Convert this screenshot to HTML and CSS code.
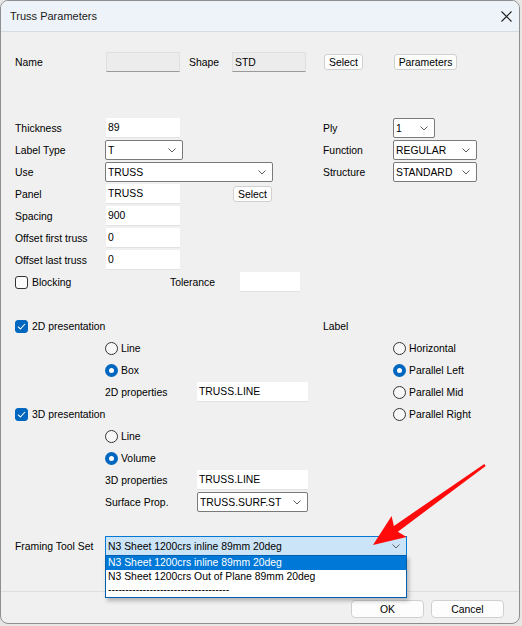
FILE: index.html
```html
<!DOCTYPE html>
<html lang="en">
<head>
    <meta charset="UTF-8">
    <title>Truss Parameters</title>
    <link rel="stylesheet" href="styles.css">
</head>
<body>
    <div class="window">
        <div class="titlebar">
            <span class="title">Truss Parameters</span>
            <svg class="close" width="11" height="11" viewBox="0 0 11 11">
                <path d="M0.5 0.5 L10.5 10.5 M10.5 0.5 L0.5 10.5" stroke="#1b1b1b" stroke-width="1.1" fill="none"/>
            </svg>
        </div>

        <div class="content">
            <div class="row row-name">
                <span class="lbl">Name</span>
                <input class="txt disabled" value="" readonly>
                <span class="lbl-shape">Shape</span>
                <input class="txt disabled" value="STD" readonly>
                <button class="btn btn-select">Select</button>
                <button class="btn btn-params">Parameters</button>
            </div>

            <div class="section">
                <div class="row">
                    <div class="left">
                        <span class="lbl">Thickness</span>
                        <input class="txt" value="89">
                    </div>
                    <div class="right">
                        <span class="rlbl">Ply</span>
                        <div class="combo w-ply"><span>1</span><svg class="chev" width="8" height="5" viewBox="0 0 8 5"><path d="M0.5 0.5 L4 4 L7.5 0.5" stroke="#5f5f5f" fill="none"/></svg></div>
                    </div>
                </div>
                <div class="row">
                    <div class="left">
                        <span class="lbl">Label Type</span>
                        <div class="combo w-label"><span>T</span><svg class="chev" width="8" height="5" viewBox="0 0 8 5"><path d="M0.5 0.5 L4 4 L7.5 0.5" stroke="#5f5f5f" fill="none"/></svg></div>
                    </div>
                    <div class="right">
                        <span class="rlbl">Function</span>
                        <div class="combo w-func"><span>REGULAR</span><svg class="chev" width="8" height="5" viewBox="0 0 8 5"><path d="M0.5 0.5 L4 4 L7.5 0.5" stroke="#5f5f5f" fill="none"/></svg></div>
                    </div>
                </div>
                <div class="row">
                    <div class="left">
                        <span class="lbl">Use</span>
                        <div class="combo w-use"><span>TRUSS</span><svg class="chev" width="8" height="5" viewBox="0 0 8 5"><path d="M0.5 0.5 L4 4 L7.5 0.5" stroke="#5f5f5f" fill="none"/></svg></div>
                    </div>
                    <div class="right">
                        <span class="rlbl">Structure</span>
                        <div class="combo w-func"><span>STANDARD</span><svg class="chev" width="8" height="5" viewBox="0 0 8 5"><path d="M0.5 0.5 L4 4 L7.5 0.5" stroke="#5f5f5f" fill="none"/></svg></div>
                    </div>
                </div>
                <div class="row">
                    <div class="left">
                        <span class="lbl">Panel</span>
                        <input class="txt" value="TRUSS">
                        <button class="btn btn-panel">Select</button>
                    </div>
                </div>
                <div class="row">
                    <div class="left">
                        <span class="lbl">Spacing</span>
                        <input class="txt" value="900">
                    </div>
                </div>
                <div class="row">
                    <div class="left">
                        <span class="lbl">Offset first truss</span>
                        <input class="txt" value="0">
                    </div>
                </div>
                <div class="row">
                    <div class="left">
                        <span class="lbl">Offset last truss</span>
                        <input class="txt" value="0">
                    </div>
                </div>
                <div class="row">
                    <div class="left">
                        <span class="check check-block"><span class="box"></span>Blocking</span>
                        <span class="lbl-tol">Tolerance</span>
                        <input class="txt w-tol" value="">
                    </div>
                </div>
            </div>

            <div class="section section-present">
                <div class="row">
                    <div class="left">
                        <span class="check"><span class="box on"><svg width="9" height="7" viewBox="0 0 9 7"><path d="M1 3.6 L3.4 6 L8 1" stroke="#fff" stroke-width="1.1" fill="none"/></svg></span>2D presentation</span>
                    </div>
                    <div class="right">
                        <span class="rlbl">Label</span>
                    </div>
                </div>
                <div class="row">
                    <div class="left indent">
                        <span class="radio"><span class="dot"></span>Line</span>
                    </div>
                    <div class="right indent-r">
                        <span class="radio"><span class="dot"></span>Horizontal</span>
                    </div>
                </div>
                <div class="row">
                    <div class="left indent">
                        <span class="radio"><span class="dot on"></span>Box</span>
                    </div>
                    <div class="right indent-r">
                        <span class="radio"><span class="dot on"></span>Parallel Left</span>
                    </div>
                </div>
                <div class="row">
                    <div class="left indent">
                        <span class="lbl-prop">2D properties</span>
                        <input class="txt w-prop" value="TRUSS.LINE">
                    </div>
                    <div class="right indent-r">
                        <span class="radio"><span class="dot"></span>Parallel Mid</span>
                    </div>
                </div>
                <div class="row">
                    <div class="left">
                        <span class="check"><span class="box on"><svg width="9" height="7" viewBox="0 0 9 7"><path d="M1 3.6 L3.4 6 L8 1" stroke="#fff" stroke-width="1.1" fill="none"/></svg></span>3D presentation</span>
                    </div>
                    <div class="right indent-r">
                        <span class="radio"><span class="dot"></span>Parallel Right</span>
                    </div>
                </div>
                <div class="row">
                    <div class="left indent">
                        <span class="radio"><span class="dot"></span>Line</span>
                    </div>
                </div>
                <div class="row">
                    <div class="left indent">
                        <span class="radio"><span class="dot on"></span>Volume</span>
                    </div>
                </div>
                <div class="row">
                    <div class="left indent">
                        <span class="lbl-prop">3D properties</span>
                        <input class="txt w-prop" value="TRUSS.LINE">
                    </div>
                </div>
                <div class="row">
                    <div class="left indent">
                        <span class="lbl-prop">Surface Prop.</span>
                        <div class="combo w-prop"><span>TRUSS.SURF.ST</span><svg class="chev" width="8" height="5" viewBox="0 0 8 5"><path d="M0.5 0.5 L4 4 L7.5 0.5" stroke="#5f5f5f" fill="none"/></svg></div>
                    </div>
                </div>
            </div>

            <div class="row row-framing">
                <span class="lbl-frame">Framing Tool Set</span>
                <div class="framing">
                    <div class="combo focused w-frame"><span>N3 Sheet 1200crs inline 89mm 20deg</span><svg class="chev" width="8" height="5" viewBox="0 0 8 5"><path d="M0.5 0.5 L4 4 L7.5 0.5" stroke="#5f5f5f" fill="none"/></svg></div>
                    <ul class="dropdown">
                        <li class="selected">N3 Sheet 1200crs inline 89mm 20deg</li>
                        <li>N3 Sheet 1200crs Out of Plane 89mm 20deg</li>
                        <li>-----------------------------------</li>
                    </ul>
                </div>
            </div>
        </div>

        <div class="footer">
            <button class="btn btn-dlg">OK</button>
            <button class="btn btn-dlg">Cancel</button>
        </div>

        <!-- annotation arrow drawn over the dialog -->
        <svg class="arrow" width="522" height="626" viewBox="0 0 522 626">
            <polygon points="484.3,464 393.9,525.9 391.6,515.9 373,545 406.6,537.1 397.9,531.7 485.7,466" fill="#ff0a0a"/>
        </svg>
    </div>
</body>
</html>
```

FILE: styles.css
```css
* {
    margin: 0;
    padding: 0;
    box-sizing: border-box;
}

body {
    background: #e5e8e5;
    font-family: "Liberation Sans", Arial, sans-serif;
    font-size: 10.4px;
    color: #000;
}

.window {
    position: relative;
    width: 520px;
    height: 624px;
    background: #f0f0f0;
    border: 1px solid #8f8f8f;
    border-radius: 8px;
    overflow: hidden;
    display: flex;
    flex-direction: column;
}

.titlebar {
    flex: none;
    height: 31px;
    display: flex;
    align-items: center;
    padding-left: 9px;
    background: #eef3f9;
    border-bottom: 1px solid #d8dce1;
}

.title {
    font-size: 11px;
    color: #1b1b1b;
}

.close {
    margin-left: auto;
    margin-right: 7px;
}

.content {
    padding: 19px 0 0 14px;
}

.row {
    display: flex;
    align-items: center;
    height: 22px;
}

.left {
    width: 308px;
    display: flex;
    align-items: center;
}

.right {
    display: flex;
    align-items: center;
}

.indent {
    padding-left: 90px;
}

.indent-r {
    padding-left: 70px;
}

.lbl {
    width: 91px;
    white-space: nowrap;
}

.rlbl {
    width: 70px;
}

.lbl-shape {
    width: 43px;
    margin-left: 9px;
}

.lbl-tol {
    width: 70px;
}

.lbl-prop {
    width: 92px;
}

.lbl-frame {
    width: 90px;
}

/* text boxes */
.txt {
    width: 74px;
    height: 20px;
    padding: 0 2px;
    font: inherit;
    color: #000;
    background: #fff;
    border: none;
    border-bottom: 1px solid #e2e2e2;
    outline: none;
}

.txt.disabled {
    background: #ececec;
    border: 1px solid #e0e0e0;
    border-bottom-color: #9a9a9a;
}

.w-tol {
    width: 60px;
}

.w-prop {
    width: 111px;
}

/* combo boxes */
.combo {
    height: 20px;
    display: flex;
    align-items: center;
    padding-left: 2px;
    background: #fff;
    border: 1px solid #7a7a7a;
    border-radius: 2px;
}

.combo span {
    flex: 1;
    white-space: nowrap;
    overflow: hidden;
}

.chev {
    flex: none;
    margin: 1px 6px 0 4px;
}

.w-ply {
    width: 42px;
}

.w-label {
    width: 78px;
    margin-left: -1px;
}

.w-use {
    width: 168px;
    margin-left: -1px;
}

.w-func {
    width: 84px;
}

.w-frame {
    width: 302px;
}

.combo.focused {
    background: #cce4f7;
    border-color: #0078d4;
    border-radius: 0;
}

/* buttons */
.btn {
    height: 16px;
    font: inherit;
    color: #000;
    background: #fdfdfd;
    border: 1px solid #d0d0d0;
    border-radius: 3px;
}

.btn-select {
    width: 39px;
    margin-left: 18px;
}

.btn-params {
    width: 63px;
    margin-left: 31px;
}

.btn-panel {
    width: 39px;
    margin-left: 53px;
}

/* check boxes and radios */
.check {
    display: flex;
    align-items: center;
    gap: 4px;
}

.check-block {
    width: 155px;
}

.box {
    width: 13px;
    height: 13px;
    display: flex;
    align-items: center;
    justify-content: center;
    border: 1px solid #333;
    border-radius: 3px;
    background: #fbfbfb;
}

.box.on {
    background: #0067c0;
    border-color: #0067c0;
}

.radio {
    display: flex;
    align-items: center;
    gap: 3px;
}

.dot {
    width: 13px;
    height: 13px;
    border: 1px solid #333;
    border-radius: 50%;
    background: #f7f7f7;
}

.dot.on {
    background: #fff;
    border: 4px solid #0067c0;
}

.section {
    margin-top: 44px;
}

.section-present {
    margin-top: 22px;
}

.row-framing {
    margin-top: 22px;
}

/* open drop-down list */
.framing {
    position: relative;
}

.dropdown {
    position: absolute;
    top: 19px;
    left: 0;
    width: 302px;
    list-style: none;
    background: #fff;
    border: 1px solid #0060b0;
    box-shadow: 2px 3px 4px rgba(0, 0, 0, 0.25);
}

.dropdown li {
    height: 13.5px;
    line-height: 13.5px;
    padding-left: 2px;
    white-space: nowrap;
}

.dropdown li.selected {
    background: #0078d7;
    color: #fff;
}

.footer {
    margin-top: auto;
    display: flex;
    justify-content: flex-end;
    gap: 7px;
    padding: 8px 15px 5px 0;
    border-top: 1px solid #dedede;
}

.btn-dlg {
    width: 73px;
    height: 18px;
    border-radius: 4px;
}

.arrow {
    position: absolute;
    top: -1px;
    left: -1px;
    pointer-events: none;
}
```
